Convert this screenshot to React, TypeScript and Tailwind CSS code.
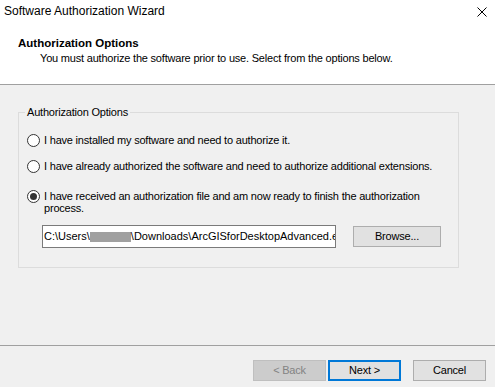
import React from "react";

function Radio({ checked }: { checked?: boolean }) {
  return (
    <span className="w-[13px] h-[13px] rounded-full border border-[#333333] bg-white flex items-center justify-center shrink-0">
      {checked && <span className="w-[7px] h-[7px] rounded-full bg-[#333333]" />}
    </span>
  );
}

export default function App() {
  return (
    <div className="w-[495px] h-[387px] bg-[#f0f0f0] flex flex-col text-[11px] tracking-[-0.2px] text-black overflow-hidden font-['Liberation_Sans',Arial,sans-serif]">
      <div className="h-[85px] bg-white border-b border-[#a0a0a0] flex flex-col shrink-0">
        <div className="h-[22px] flex items-center justify-between pl-[4px] pr-[8px]">
          <span className="text-[12px] tracking-normal leading-[15px]">Software Authorization Wizard</span>
          <svg width="10" height="10" viewBox="0 0 10 10" className="mt-[1px]">
            <path d="M0.5 0.5 L9.5 9.5 M9.5 0.5 L0.5 9.5" stroke="#000" strokeWidth="1" fill="none" />
          </svg>
        </div>
        <div className="pl-[18px] mt-[14px] text-[11.5px] tracking-normal font-bold leading-[15px]">Authorization Options</div>
        <div className="pl-[40px] leading-[15px]">You must authorize the software prior to use. Select from the options below.</div>
      </div>

      <div className="h-[260px] px-[18px] shrink-0">
        <fieldset className="mt-[20px] w-[441px] h-[163px] border border-[#dcdcdc]">
          <legend className="ml-[6px] px-[2px] leading-[14px]">Authorization Options</legend>
          <div className="pl-[8px] mt-[15px] flex items-center gap-[4px] leading-[13px]">
            <Radio />
            <span>I have installed my software and need to authorize it.</span>
          </div>
          <div className="pl-[8px] mt-[13px] flex items-center gap-[4px] leading-[13px]">
            <Radio />
            <span>I have already authorized the software and need to authorize additional extensions.</span>
          </div>
          <div className="pl-[8px] mt-[17px] flex items-start gap-[4px] leading-[12px]">
            <Radio checked />
            <span className="whitespace-nowrap">
              I have received an authorization file and am now ready to finish the authorization
              <br />
              process.
            </span>
          </div>
          <div className="pl-[23px] mt-[11px] flex items-start gap-[17px]">
            <div className="w-[294px] h-[23px] border border-[#7a7a7a] bg-white flex items-center pl-[1px] overflow-hidden whitespace-nowrap tracking-normal">
              <span className="shrink-0">C:\Users\</span>
              <span className="shrink-0 w-[41px] h-[10px] bg-[#a0a0a0]" />
              <span className="shrink-0">\Downloads\ArcGISforDesktopAdvanced.ecp</span>
            </div>
            <button className="mt-[1px] w-[88px] h-[21px] border border-[#adadad] bg-[#e1e1e1] flex items-center justify-center leading-[13px]">
              Browse...
            </button>
          </div>
        </fieldset>
      </div>

      <div className="flex-1 border-t border-[#a0a0a0] flex justify-end items-start pt-[14px] pr-[9px]">
        <button className="w-[73px] h-[21px] border border-[#bfbfbf] bg-[#cccccc] text-[#838383] flex items-center justify-center">
          &lt; Back
        </button>
        <button className="ml-[2px] w-[73px] h-[21px] border-2 border-[#0078d7] bg-[#e1e1e1] flex items-center justify-center">
          Next &gt;
        </button>
        <button className="ml-[12px] w-[73px] h-[21px] border border-[#adadad] bg-[#e1e1e1] flex items-center justify-center">
          Cancel
        </button>
      </div>
    </div>
  );
}
